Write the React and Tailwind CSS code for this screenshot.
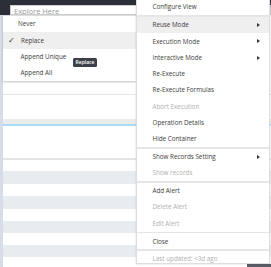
import React from "react";

const font = { fontFamily: '"Open Sans", "Liberation Sans", sans-serif' };

function Arrow() {
  return (
    <svg width="3" height="4" viewBox="0 0 3 4" className="ml-auto mr-[9px]">
      <path d="M0 0 L3 2 L0 4 Z" fill="#333" />
    </svg>
  );
}

function Item({ children, disabled, active, arrow }) {
  return (
    <div
      className={
        "h-[16.3px] flex items-center pl-[15.5px] text-[6.3px] whitespace-nowrap " +
        (disabled ? "text-[#b0b0b0] " : "text-[#3c3c3c] ") +
        (active ? "bg-[#efefef]" : "")
      }
    >
      <span>{children}</span>
      {arrow && <Arrow />}
    </div>
  );
}

function Sep() {
  return <div className="h-[1.5px] bg-[#e6e6e6]" />;
}

function SubItem({ children, active, check, pl }) {
  return (
    <div
      className={
        "relative h-[16.3px] flex items-center text-[6.3px] text-[#3c3c3c] whitespace-nowrap " +
        pl +
        (active ? " bg-[#efefef]" : "")
      }
    >
      {check && (
        <span className="absolute left-[5px] text-[8px] text-[#333]">✓</span>
      )}
      <span>{children}</span>
    </div>
  );
}

export default function App() {
  return (
    <div
      className="relative w-[271px] h-[267px] overflow-hidden bg-white"
      style={font}
    >
      {/* background page */}
      <div className="flex flex-col h-full">
        <div className="h-[15px] bg-[#2c2f37] pt-[5px] pl-[10px] shrink-0">
          <div className="h-[10px] bg-white border border-[#cfcfcf] pl-[3px] text-[7.5px] leading-[11px] text-[#9a9a9a] overflow-hidden">
            Explore Here
          </div>
        </div>
        <div className="flex flex-1">
          <div className="w-[3px] bg-[#d6dde8] shrink-0" />
          <div className="flex-1 flex flex-col">
            <div className="h-[79px]" />
            <div className="h-px bg-[#e6e6e6]" />
            <div className="h-[24px]" />
            <div className="h-[5px] bg-[#ececec]" />
            <div className="h-[2px] bg-[#a8dcf2]" />
            <div className="h-[32px]" />
            <div className="h-[2px] bg-[#e3e3e3]" />
            <div className="h-[11px]" />
            <div className="h-[13px] bg-[#e9ecef]" />
            <div className="h-[12px]" />
            <div className="h-[13px] bg-[#e9ecef]" />
            <div className="h-[12px]" />
            <div className="h-[12px] bg-[#e9ecef]" />
            <div className="h-[12px]" />
            <div className="h-[12px] bg-[#e9ecef]" />
            <div className="flex-1" />
          </div>
        </div>
      </div>

      {/* sub menu */}
      <div className="absolute left-[3px] top-[15px] w-[133px] bg-white border-t border-[#dcdcdc] shadow-[0_1px_2px_rgba(0,0,0,0.25)]">
        <SubItem pl="pl-[15px]">Never</SubItem>
        <SubItem pl="pl-[18px]" active check>
          Replace
        </SubItem>
        <SubItem pl="pl-[17.5px]">Append Unique</SubItem>
        <SubItem pl="pl-[17.5px]">Append All</SubItem>
      </div>

      {/* tooltip */}
      <div className="absolute left-[73px] top-[58px] w-[24px] h-[9px] rounded-[1.5px] bg-[#3b3f48] flex items-center justify-center text-[5px] font-semibold text-white">
        Replace
      </div>

      {/* bottom-right dark edge */}
      <div className="absolute left-[247px] top-[264px] w-[24px] h-[3px] bg-[#5a5e66]" />

      {/* main menu */}
      <div className="absolute left-[136px] top-[-1px] w-[134px] h-[265px] bg-white border-l border-r border-b border-[#dedede] shadow-[0_0_2px_rgba(0,0,0,0.15)]">
        <Item>Configure View</Item>
        <Sep />
        <Item active arrow>
          Reuse Mode
        </Item>
        <Item arrow>Execution Mode</Item>
        <Item arrow>Interactive Mode</Item>
        <Item>Re-Execute</Item>
        <Item>Re-Execute Formulas</Item>
        <Item disabled>Abort Execution</Item>
        <Item>Operation Details</Item>
        <Item>Hide Container</Item>
        <Sep />
        <Item arrow>Show Records Setting</Item>
        <Item disabled>Show records</Item>
        <Sep />
        <Item>Add Alert</Item>
        <Item disabled>Delete Alert</Item>
        <Item disabled>Edit Alert</Item>
        <Sep />
        <Item>Close</Item>
        <Sep />
        <Item disabled>Last updated: &lt;3d ago</Item>
      </div>
    </div>
  );
}
